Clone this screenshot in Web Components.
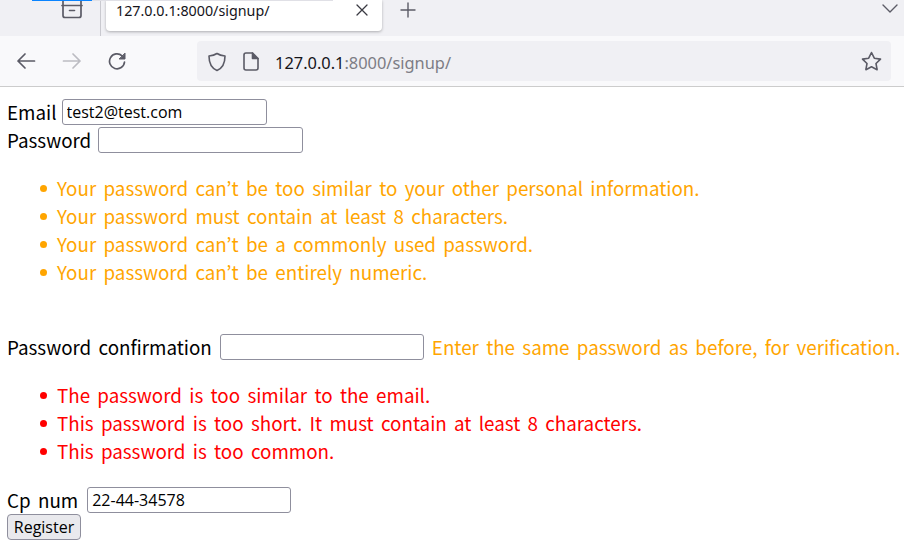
<!DOCTYPE html>
<html><head><meta charset="utf-8"><style>
html,body{margin:0;padding:0;background:#fff;overflow:hidden}
body{width:904px;height:546px}
</style></head><body>
<browser-chrome></browser-chrome>
<signup-page></signup-page>
<script>
class BrowserChrome extends HTMLElement{constructor(){super();this.attachShadow({mode:'open'}).innerHTML=`<style>
:host{display:block;font-family:"Noto Sans","Open Sans",sans-serif;color:#15141a}
svg{display:block;fill:none;stroke-linecap:round;stroke-linejoin:round}
.tabs{height:36px;background:#f0f0f4;display:flex;position:relative;align-items:flex-start}
.edge{position:absolute;left:32px;top:0;width:60px;height:1px;background:#0a84ff}
.edge2{position:absolute;left:92px;top:0;width:241px;height:1px;background:#e0e0e6;z-index:2}
.pin{width:101px;height:36px;box-sizing:border-box;border-right:1px solid #c9c9cf;display:flex;justify-content:center;padding-left:44px}
.tab{margin-left:5px;width:276px;height:31px;background:#fff;border-radius:0 0 4px 4px;box-shadow:0 1px 3px rgba(0,0,0,.28);display:flex;align-items:center;font-size:14.3px;box-sizing:border-box;padding:0 14px 11px 10px;justify-content:space-between}
.plus{margin-left:18px;margin-top:2px}
.chev{position:absolute;right:6px;top:4px}
.bar{height:50px;background:#f9f9fb;border-bottom:1px solid #ccc;display:flex;align-items:center;padding:0 13px 0 16px}
.nav{display:flex;gap:26px;align-items:center;margin-right:70px}
.url{flex:1;height:40px;background:#f0f0f4;border-radius:4px;display:flex;align-items:center;padding:0 9px;font-size:16.4px;color:#15141a}
.url .t{padding-top:3px}
.url .dim{color:#7d7d85}
.sp{flex:1}
</style>
<div class="tabs"><div class="edge"></div><div class="edge2"></div>
<div class="pin"><svg width="22" height="19" viewBox="0 0 22 19" stroke="#5b5b66" stroke-width="1.7"><path d="M2 1v14.5a2 2 0 0 0 2 2h14a2 2 0 0 0 2-2V1"/><path d="M1 5.5h20"/><path d="M8.500 10.500h5" stroke-width="1.6"/></svg></div>
<div class="tab"><span>127.0.0.1:8000/signup/</span><svg width="12" height="12" viewBox="0 0 12 12" stroke="#3a3a42" stroke-width="1.3"><path d="M1 1l10 10M11 1L1 11"/></svg></div>
<svg class="plus" width="16" height="16" viewBox="0 0 16 16" stroke="#5b5b66" stroke-width="1.4"><path d="M8 1v14M1 8h14"/></svg>
<svg class="chev" width="16" height="10" viewBox="0 0 16 10" stroke="#5b5b66" stroke-width="1.4"><path d="M1 1l7 7 7-7"/></svg>
</div>
<div class="bar"><div class="nav">
<svg width="20" height="18" viewBox="0 0 20 18" stroke="#5b5b66" stroke-width="1.7"><path d="M18.5 9H2M9 2L2 9l7 7"/></svg>
<svg width="20" height="18" viewBox="0 0 20 18" stroke="#bcbcc2" stroke-width="1.7"><path d="M1.500 9H18M11 2l7 7-7 7"/></svg>
<svg width="19" height="19" viewBox="0 0 19 19" stroke="#5b5b66" stroke-width="1.7"><path d="M16.500 10a7.500 7.500 0 1 1-2.400-6.200"/><path d="M17 1.500v5.500h-5.500z" fill="#5b5b66" stroke-width="1"/></svg>
</div><div class="url">
<svg width="20" height="22" viewBox="0 0 20 20" stroke="#5b5b66" stroke-width="1.6" style="margin:2px 16px 0 1px"><path d="M10 1.500c2 1.500 4.500 2.300 8 2.500 0 7-2 12-8 14.500C4 16 2 11 2 4c3.500-.2 6-1 8-2.500z"/></svg>
<svg width="16" height="19" viewBox="0 0 16 19" stroke="#5b5b66" stroke-width="1.600" style="margin:1px 16px 0 0"><path d="M3 1h6.500L15 6.500V16a2 2 0 0 1-2 2H3a2 2 0 0 1-2-2V3a2 2 0 0 1 2-2z"/><path d="M9.500 1v5.500H15" fill="#5b5b66"/></svg>
<span class="t">127.0.0.1<span class="dim">:8000/signup/</span></span><span class="sp"></span>
<svg width="21" height="20" viewBox="0 0 21 20" stroke="#5b5b66" stroke-width="1.6"><path d="M10.500 1.500l2.800 5.700 6.200.9-4.500 4.400 1.100 6.200-5.600-2.900-5.600 2.900 1.100-6.200L1.500 8.100l6.200-.9z"/></svg>
</div></div>`}}
customElements.define('browser-chrome',BrowserChrome);

class FieldRow extends HTMLElement{constructor(){super();const v=this.getAttribute('value')||'';const w=this.getAttribute('width')||'205';const g=this.getAttribute('gap')||'7';this.attachShadow({mode:'open'}).innerHTML=`<style>
:host{display:flex;align-items:center;height:28px;line-height:28px;white-space:nowrap}
label{margin-right:${g}px}
input{box-sizing:border-box;width:${w}px;height:26px;border:1px solid #8f8f9d;border-radius:3px;padding:0 4px;font:16px "Open Sans","Noto Sans",sans-serif;color:#000;background:#fff;margin:0}
::slotted(*){margin-left:8px}
</style><label>${this.getAttribute('label')}</label><input value="${v}"><slot></slot>`}}
customElements.define('field-row',FieldRow);

class NoteList extends HTMLElement{constructor(){super();this.attachShadow({mode:'open'}).innerHTML=`<style>
:host{display:block;padding-left:50px}
</style><slot></slot>`}}
customElements.define('note-list',NoteList);

class NoteItem extends HTMLElement{constructor(){super();this.attachShadow({mode:'open'}).innerHTML=`<style>
:host{display:block;height:28px;line-height:26px;position:relative;white-space:nowrap}
i{position:absolute;left:-17px;top:10px;width:7px;height:7px;border-radius:50%;background:currentColor}
</style><i></i><slot></slot>`}}
customElements.define('note-item',NoteItem);

class SignupPage extends HTMLElement{constructor(){super();this.attachShadow({mode:'open'}).innerHTML=`<style>
:host{display:block;padding:11px 0 0 7px;font:18.8px "Noto Sans CJK KR","Noto Sans",sans-serif;color:#000;word-spacing:3.1px}
.o{color:#ffa500}.r{color:#f00}
.l1{margin-top:21px}.l2{margin-top:46px}.l3{margin-top:21px}.l4{margin-top:20px}
button{display:block;box-sizing:border-box;width:74px;height:26px;padding:0;border:1px solid #8f8f9d;border-radius:4px;background:#e9e9ed;font:16px "Open Sans","Noto Sans",sans-serif;color:#000;margin:0;word-spacing:0}
</style>
<field-row label="Email" value="test2@test.com" gap="5"></field-row>
<field-row label="Password"></field-row>
<note-list class="o l1">
<note-item>Your password can’t be too similar to your other personal information.</note-item>
<note-item>Your password must contain at least 8 characters.</note-item>
<note-item>Your password can’t be a commonly used password.</note-item>
<note-item>Your password can’t be entirely numeric.</note-item>
</note-list>
<field-row class="l2" label="Password confirmation" gap="8" width="204"><span class="o">Enter the same password as before, for verification.</span></field-row>
<note-list class="r l3">
<note-item>The password is too similar to the email.</note-item>
<note-item>This password is too short. It must contain at least 8 characters.</note-item>
<note-item>This password is too common.</note-item>
</note-list>
<field-row class="l4" label="Cp num" value="22-44-34578" width="204" gap="9"></field-row>
<button>Register</button>`}}
customElements.define('signup-page',SignupPage);
</script></body></html>
